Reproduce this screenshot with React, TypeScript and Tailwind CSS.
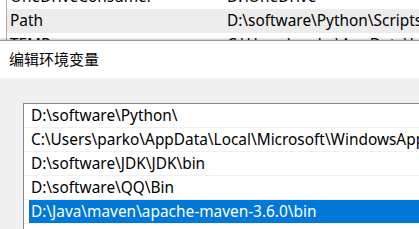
import React from "react"

// Edit environment variable dialog, on top of the system variables list
const paths = [
	"D:\\software\\Python\\",
	"C:\\Users\\parko\\AppData\\Local\\Microsoft\\WindowsApps",
	"D:\\software\\JDK\\JDK\\bin",
	"D:\\software\\QQ\\Bin",
	"D:\\Java\\maven\\apache-maven-3.6.0\\bin",
]

const behind = [
	{ name: "OneDriveConsumer", value: "D:\\OneDrive" },
	{ name: "Path", value: "D:\\software\\Python\\Scripts\\;D:\\software\\Python\\", active: true },
	{ name: "TEMP", value: "C:\\Users\\parko\\AppData\\Local\\Temp" },
]

export default function App() {
	const font = { fontFamily: '"Noto Sans", "Noto Sans CJK SC", sans-serif' }
	return (
		<div className="w-[419px] h-[229px] overflow-hidden bg-[#f0f0f0] text-[15.4px] text-black" style={font}>
			{/* window behind */}
			<div className="h-[40px] overflow-hidden bg-white pl-[6px]">
				<div className="-mt-[15px] border-l border-[#acacac]">
					{behind.map((r) => (
						<div
							key={r.name}
							className={`flex h-[24px] items-center whitespace-nowrap ${r.active ? "bg-[#ececec]" : ""}`}
						>
							<span className="w-[220px] shrink-0 pl-[3px]">{r.name}</span>
							<span>{r.value}</span>
						</div>
					))}
				</div>
			</div>

			{/* dialog */}
			<div className="border-t border-[#9a9a9a] shadow-[0_-1px_2px_rgba(0,0,0,0.25)]">
				<div className="flex h-[37px] items-center bg-white pl-[9px] text-[15px]">编辑环境变量</div>
				<div className="pl-[23px] pt-[25px]">
					<div className="h-[200px] border-l border-t border-[#828790] bg-white">
						{paths.map((p, i) => (
							<div key={p} className="h-[24px] border-b border-[#f0f0f0] pl-[5px]">
								<div
									className={`flex h-[23px] items-center whitespace-nowrap pl-[2px] ${
										i === paths.length - 1 ? "bg-[#0078d7] text-white" : ""
									}`}
								>
									{p}
								</div>
							</div>
						))}
					</div>
				</div>
			</div>
		</div>
	)
}
